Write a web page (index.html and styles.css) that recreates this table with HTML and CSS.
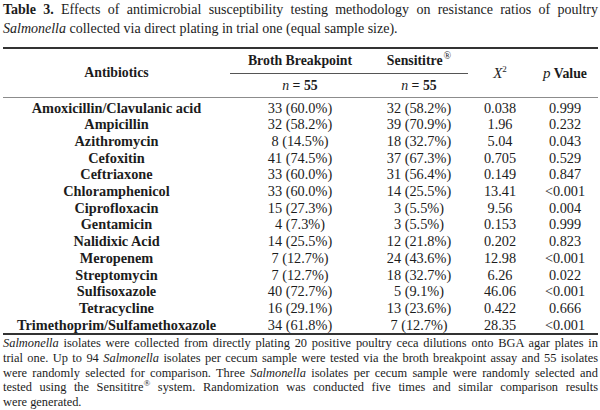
FILE: index.html
```html
<!DOCTYPE html>
<html>
<head>
<meta charset="utf-8">
<link rel="stylesheet" href="styles.css">
</head>
<body>
<div class="fig">
  <p class="caption">
    <span class="line"><b>Table 3.</b> Effects of antimicrobial susceptibility testing methodology on resistance ratios of poultry</span>
    <span class="line last"><i>Salmonella</i> collected via direct plating in trial one (equal sample size).</span>
  </p>
  <table class="data">
    <colgroup>
      <col class="c1"><col class="c2"><col class="c3"><col class="c4"><col class="c5">
    </colgroup>
    <thead>
      <tr class="h1">
        <th rowspan="2" class="spanned">Antibiotics</th>
        <th class="grp">Broth Breakpoint</th>
        <th class="grp">Sensititre<sup class="reg">®</sup></th>
        <th rowspan="2" class="spanned chi"><i>X</i><sup>2</sup></th>
        <th rowspan="2" class="spanned"><i class="pv">p</i> Value</th>
      </tr>
      <tr class="h2">
        <th><i>n</i> = 55</th>
        <th><i>n</i> = 55</th>
      </tr>
    </thead>
    <tbody>
      <tr><th>Amoxicillin/Clavulanic acid</th><td>33 (60.0%)</td><td>32 (58.2%)</td><td>0.038</td><td>0.999</td></tr>
      <tr><th>Ampicillin</th><td>32 (58.2%)</td><td>39 (70.9%)</td><td>1.96</td><td>0.232</td></tr>
      <tr><th>Azithromycin</th><td>8 (14.5%)</td><td>18 (32.7%)</td><td>5.04</td><td>0.043</td></tr>
      <tr><th>Cefoxitin</th><td>41 (74.5%)</td><td>37 (67.3%)</td><td>0.705</td><td>0.529</td></tr>
      <tr><th>Ceftriaxone</th><td>33 (60.0%)</td><td>31 (56.4%)</td><td>0.149</td><td>0.847</td></tr>
      <tr><th>Chloramphenicol</th><td>33 (60.0%)</td><td>14 (25.5%)</td><td>13.41</td><td>&lt;0.001</td></tr>
      <tr><th>Ciprofloxacin</th><td>15 (27.3%)</td><td>3 (5.5%)</td><td>9.56</td><td>0.004</td></tr>
      <tr><th>Gentamicin</th><td>4 (7.3%)</td><td>3 (5.5%)</td><td>0.153</td><td>0.999</td></tr>
      <tr><th>Nalidixic Acid</th><td>14 (25.5%)</td><td>12 (21.8%)</td><td>0.202</td><td>0.823</td></tr>
      <tr><th>Meropenem</th><td>7 (12.7%)</td><td>24 (43.6%)</td><td>12.98</td><td>&lt;0.001</td></tr>
      <tr><th>Streptomycin</th><td>7 (12.7%)</td><td>18 (32.7%)</td><td>6.26</td><td>0.022</td></tr>
      <tr><th>Sulfisoxazole</th><td>40 (72.7%)</td><td>5 (9.1%)</td><td>46.06</td><td>&lt;0.001</td></tr>
      <tr><th>Tetracycline</th><td>16 (29.1%)</td><td>13 (23.6%)</td><td>0.422</td><td>0.666</td></tr>
      <tr><th>Trimethoprim/Sulfamethoxazole</th><td>34 (61.8%)</td><td>7 (12.7%)</td><td>28.35</td><td>&lt;0.001</td></tr>
    </tbody>
  </table>
  <p class="note">
    <span class="line"><i>Salmonella</i> isolates were collected from directly plating 20 positive poultry ceca dilutions onto BGA agar plates in</span>
    <span class="line">trial one. Up to 94 <i>Salmonella</i> isolates per cecum sample were tested via the broth breakpoint assay and 55 isolates</span>
    <span class="line">were randomly selected for comparison. Three <i>Salmonella</i> isolates per cecum sample were randomly selected and</span>
    <span class="line">tested using the Sensititre<sup class="reg">®</sup> system. Randomization was conducted five times and similar comparison results</span>
    <span class="line last">were generated.</span>
  </p>
</div>
</body>
</html>
```

FILE: styles.css
```css
html, body {
  margin: 0;
  padding: 0;
  background: #ffffff;
}

body {
  font-family: "Liberation Serif", "Times New Roman", serif;
  color: #1c1c1c;
  width: 600px;
  height: 410px;
  overflow: hidden;
}

.fig {
  padding: 0 2px 0 3px;
}

.caption {
  margin: 0;
  font-size: 14px;
  line-height: 19px;
}

.line {
  display: block;
  text-align: justify;
  text-align-last: justify;
  white-space: nowrap;
}

.line.last {
  text-align-last: left;
}

.data {
  width: 595px;
  margin-top: 9px;
  border-collapse: collapse;
  table-layout: fixed;
  font-size: 14.3px;
}

.c1 { width: 227px; }
.c2 { width: 140px; }
.c3 { width: 98px; }
.c4 { width: 64px; }
.c5 { width: 66px; }

.data th,
.data td {
  padding: 0;
  text-align: center;
  white-space: nowrap;
}

.data thead th {
  font-size: 13.8px;
  font-weight: bold;
}

.data thead tr.h1 th {
  border-top: 2px solid #333333;
  height: 24px;
}

.data thead th.grp {
  border-bottom: 1px solid #555555;
}

.data thead tr.h2 th {
  height: 23px;
  border-bottom: 1px solid #8c8c8c;
}

.data thead th.spanned {
  border-bottom: 1px solid #8c8c8c;
}

.data thead th.chi {
  font-weight: normal;
  font-size: 15px;
}

.data thead i {
  font-weight: normal;
}

.data thead .pv {
  font-size: 15px;
}

.data sup {
  font-size: 9px;
  line-height: 0;
  vertical-align: 6px;
}

.data sup.reg {
  font-weight: normal;
  font-size: 10px;
  margin-left: 1px;
}

.data tbody th {
  font-weight: bold;
}

.data tbody th,
.data tbody td {
  height: 16.7px;
  line-height: 16.7px;
}

.data tbody tr:first-child th,
.data tbody tr:first-child td {
  padding-top: 1.5px;
}

.data tbody tr:last-child th,
.data tbody tr:last-child td {
  border-bottom: 2px solid #333333;
}

.note {
  margin: 1px 0 0 0;
  font-size: 12.4px;
  line-height: 14.6px;
}

.note sup.reg {
  font-size: 9px;
  line-height: 0;
  vertical-align: 5px;
}
```
